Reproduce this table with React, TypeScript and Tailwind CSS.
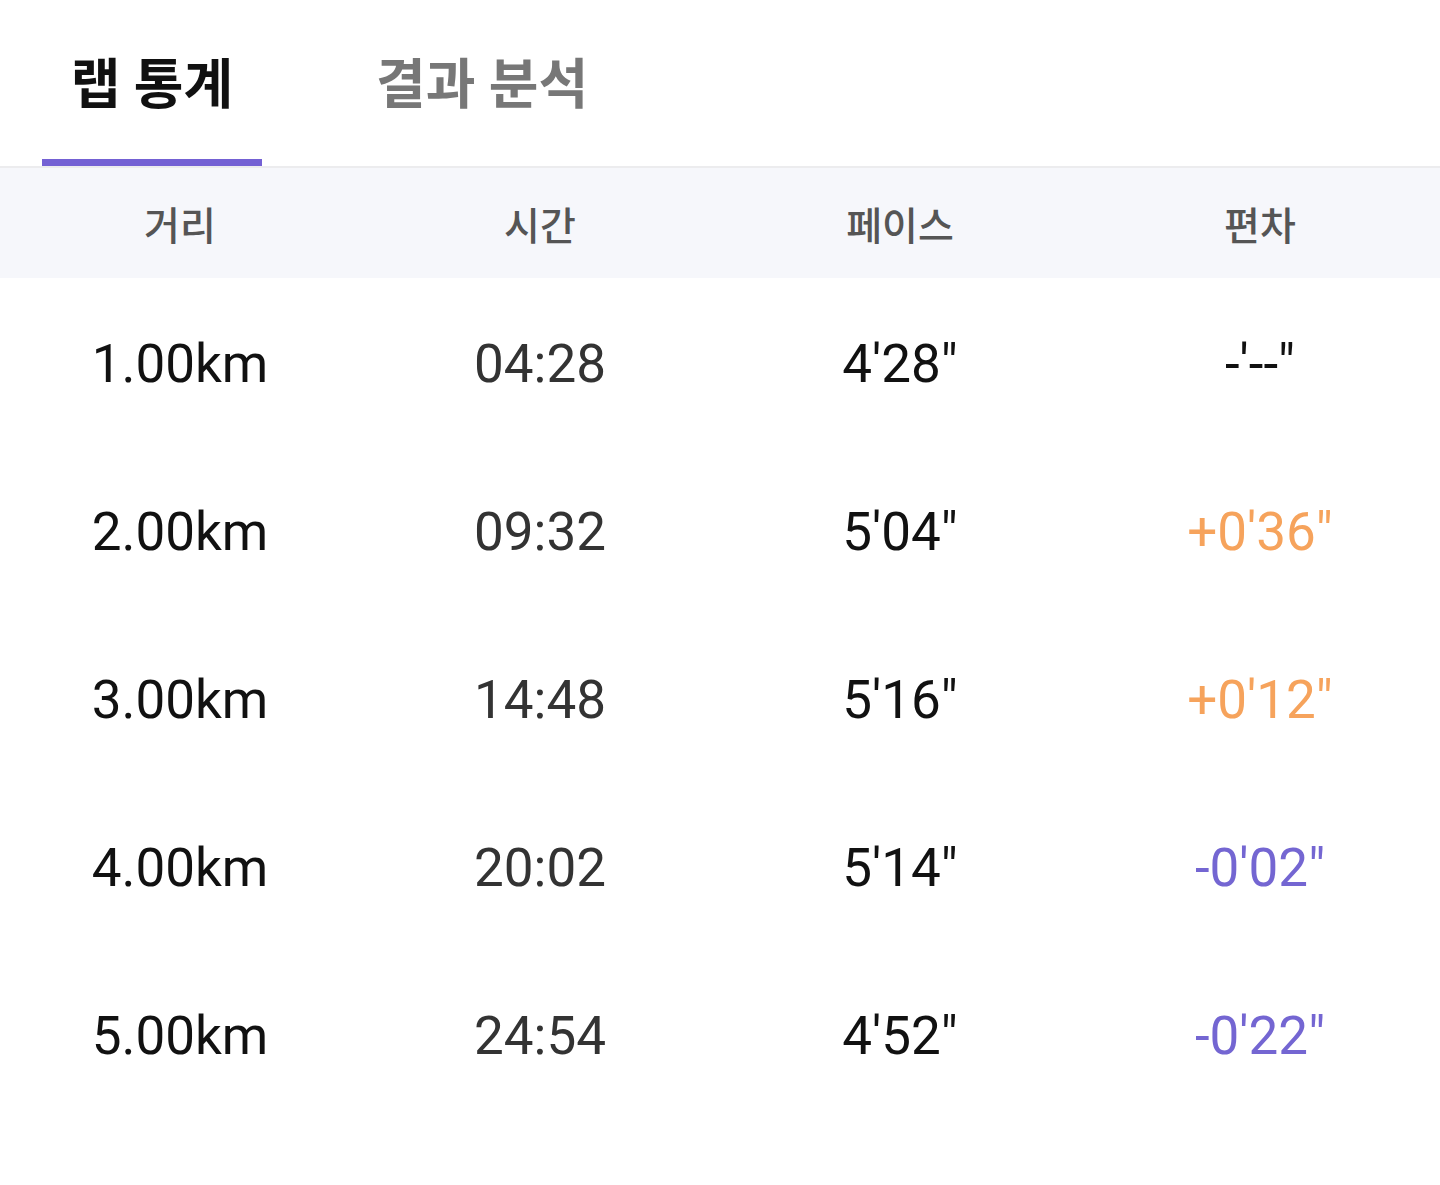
import React from "react";

const rows = [
  { d: "1.00km", t: "04:28", p: "4'28\"", v: "-'--\"", c: "text-[#111111]" },
  { d: "2.00km", t: "09:32", p: "5'04\"", v: "+0'36\"", c: "text-[#f6a35c]" },
  { d: "3.00km", t: "14:48", p: "5'16\"", v: "+0'12\"", c: "text-[#f6a35c]" },
  { d: "4.00km", t: "20:02", p: "5'14\"", v: "-0'02\"", c: "text-[#7466d2]" },
  { d: "5.00km", t: "24:54", p: "4'52\"", v: "-0'22\"", c: "text-[#7466d2]" },
];

export default function App() {
  return (
    <div
      className="w-[1440px] h-[1185px] bg-white"
      style={{ fontFamily: 'Roboto, "Noto Sans CJK KR", sans-serif' }}
    >
      <div className="flex h-[166px] pl-[42px] gap-[84px]">
        <div className="flex flex-col w-[220px]">
          <div className="flex-1 flex items-center justify-center text-[54px] font-bold text-[#111111] pt-[12px]">
            랩 통계
          </div>
          <div className="h-[7px] bg-[#7461d4]" />
        </div>
        <div className="flex flex-col px-[30px]">
          <div className="flex-1 flex items-center justify-center text-[54px] font-bold text-[#777777] pt-[12px]">
            결과 분석
          </div>
          <div className="h-[7px]" />
        </div>
      </div>
      <div className="h-[2px] bg-[#ececee]" />
      <div className="grid grid-cols-4 h-[110px] bg-[#f6f7fb] items-center text-[39px] font-medium text-[#555555] pt-[8px]">
        <div className="text-center">거리</div>
        <div className="text-center">시간</div>
        <div className="text-center">페이스</div>
        <div className="text-center">편차</div>
      </div>
      {rows.map((r) => (
        <div key={r.d} className="grid grid-cols-4 h-[168px] items-center text-[53px] pt-[6px]">
          <div className="text-center text-[#111111]">{r.d}</div>
          <div className="text-center text-[#333333]">{r.t}</div>
          <div className="text-center text-[#111111]">{r.p}</div>
          <div className={`text-center ${r.c}`}>{r.v}</div>
        </div>
      ))}
    </div>
  );
}
